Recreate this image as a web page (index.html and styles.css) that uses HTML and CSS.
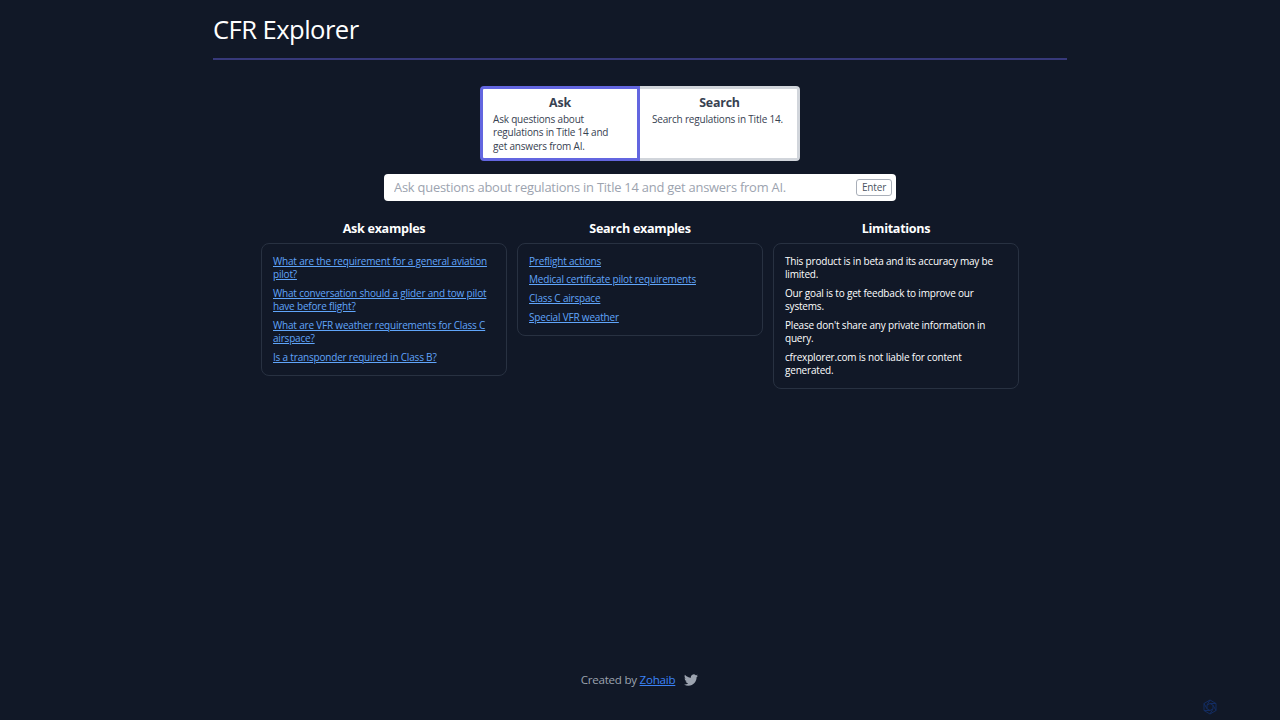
FILE: index.html
```html
<!DOCTYPE html>
<html lang="en">
<head>
    <meta charset="utf-8">
    <title>CFR Explorer</title>
    <link rel="stylesheet" href="styles.css">
</head>
<body>
    <div class="container">
        <header class="header">
            <h1>CFR Explorer</h1>
        </header>

        <main>
            <!-- Mode switch -->
            <div class="modes">
                <div class="mode active">
                    <h3>Ask</h3>
                    <p>Ask questions about<br>regulations in Title 14 and<br>get answers from AI.</p>
                </div>
                <div class="mode">
                    <h3>Search</h3>
                    <p>Search regulations in Title 14.</p>
                </div>
            </div>

            <div class="search-bar">
                <input type="text" placeholder="Ask questions about regulations in Title 14 and get answers from AI.">
                <button class="enter">Enter</button>
            </div>

            <!-- Examples -->
            <div class="columns">
                <section>
                    <h2>Ask examples</h2>
                    <ul class="card">
                        <li><a href="#">What are the requirement for a general aviation<br>pilot?</a></li>
                        <li><a href="#">What conversation should a glider and tow pilot<br>have before flight?</a></li>
                        <li><a href="#">What are VFR weather requirements for Class C<br>airspace?</a></li>
                        <li><a href="#">Is a transponder required in Class B?</a></li>
                    </ul>
                </section>
                <section>
                    <h2>Search examples</h2>
                    <ul class="card">
                        <li><a href="#">Preflight actions</a></li>
                        <li><a href="#">Medical certificate pilot requirements</a></li>
                        <li><a href="#">Class C airspace</a></li>
                        <li><a href="#">Special VFR weather</a></li>
                    </ul>
                </section>
                <section>
                    <h2>Limitations</h2>
                    <ul class="card">
                        <li>This product is in beta and its accuracy may be<br>limited.</li>
                        <li>Our goal is to get feedback to improve our<br>systems.</li>
                        <li>Please don't share any private information in<br>query.</li>
                        <li>cfrexplorer.com is not liable for content<br>generated.</li>
                    </ul>
                </section>
            </div>
        </main>

        <footer class="footer">
            <span>Created by <a href="#">Zohaib</a></span>
            <svg class="twitter" viewBox="0 0 24 24" fill="currentColor">
                <path d="M23.953 4.57a10 10 0 01-2.825.775 4.958 4.958 0 002.163-2.723c-.951.555-2.005.959-3.127 1.184a4.92 4.92 0 00-8.384 4.482C7.69 8.095 4.067 6.13 1.64 3.162a4.822 4.822 0 00-.666 2.475c0 1.71.87 3.213 2.188 4.096a4.904 4.904 0 01-2.228-.616v.06a4.923 4.923 0 003.946 4.827 4.996 4.996 0 01-2.212.085 4.936 4.936 0 004.604 3.417 9.867 9.867 0 01-6.102 2.105c-.39 0-.779-.023-1.17-.067a13.995 13.995 0 007.557 2.209c9.053 0 13.998-7.496 13.998-13.985 0-.21 0-.42-.015-.63A9.935 9.935 0 0024 4.59z"/>
            </svg>
        </footer>
    </div>

    <svg class="badge" viewBox="0 0 16 16" fill="none" stroke="currentColor">
        <path d="M8 1 14 4.5V11.5L8 15 2 11.5V4.5Z"/>
        <path d="M8 4.5 11 6.2V9.8L8 11.5 5 9.8V6.2Z"/>
        <path d="M8 1 5 6.2M14 4.5H8M14 11.5 11 6.2M8 15 11 9.8M2 11.5H8M2 4.5 5 9.8"/>
    </svg>
</body>
</html>
```

FILE: styles.css
```css
* {
    box-sizing: border-box;
    margin: 0;
    padding: 0;
}

body {
    height: 720px;
    overflow: hidden;
    background: #111827;
    color: #fff;
    font-family: "Open Sans", "Noto Sans", sans-serif;
    font-size: 10px;
    line-height: 13.4px;
    letter-spacing: -0.19px;
}

.container {
    display: flex;
    flex-direction: column;
    width: 854px;
    height: 720px;
    margin: 0 auto;
}

.header {
    height: 60px;
    padding-top: 13px;
    border-bottom: 2px solid #37397a;
}

h1 {
    font-size: 25.6px;
    font-weight: 400;
    line-height: 34px;
    letter-spacing: -0.55px;
}

.modes {
    display: flex;
    width: 320px;
    height: 75px;
    margin: 26px auto 0;
}

.mode {
    width: 160px;
    padding: 6px 0 0 12px;
    background: #fff;
    color: #374151;
    border: 3px solid #d1d5db;
    border-left-width: 0;
    border-radius: 0 4px 4px 0;
}

.mode.active {
    padding-left: 10px;
    border: 3px solid #6366e0;
    border-radius: 4px 0 0 4px;
}

.mode h3 {
    margin-right: 10px;
    font-size: 12.4px;
    line-height: 15px;
    text-align: center;
}

.mode p {
    padding-top: 3px;
}

.search-bar {
    display: flex;
    align-items: center;
    width: 512px;
    height: 27px;
    margin: 13px auto 0;
    padding: 0 4px 0 10px;
    background: #fff;
    border-radius: 4px;
}

.search-bar input {
    flex: 1;
    padding-bottom: 1px;
    border: none;
    outline: none;
    font-family: inherit;
    font-size: 12.9px;
    letter-spacing: -0.22px;
}

.search-bar input::placeholder {
    color: #9ca3af;
}

.enter {
    width: 36px;
    height: 17px;
    background: #fff;
    color: #4b5563;
    border: 1px solid #a9afb9;
    border-radius: 3px;
    font-family: inherit;
    font-size: 10px;
    line-height: 13px;
    letter-spacing: -0.15px;
}

.columns {
    display: grid;
    grid-template-columns: repeat(3, 246px);
    align-items: start;
    justify-content: center;
    column-gap: 10px;
    margin-top: 19px;
}

h2 {
    font-size: 12.6px;
    line-height: 18px;
    letter-spacing: -0.3px;
    text-align: center;
}

.card {
    margin-top: 5px;
    padding: 10.6px 11px 5.4px;
    border: 1px solid #283141;
    border-radius: 8px;
    list-style: none;
}

.card li {
    margin-bottom: 5.25px;
    white-space: nowrap;
}

.card a {
    color: #60a5fa;
}

.footer {
    display: flex;
    align-items: center;
    justify-content: center;
    gap: 9px;
    height: 20px;
    margin-top: auto;
    margin-bottom: 30px;
    padding-right: 1px;
    color: #9ca3af;
    font-size: 11.6px;
    letter-spacing: -0.25px;
}

.footer a {
    color: #3b82f6;
}

.twitter {
    width: 14px;
    height: 14px;
}

.badge {
    position: absolute;
    right: 62px;
    bottom: 5px;
    width: 16px;
    height: 16px;
    color: #132c61;
}
```
